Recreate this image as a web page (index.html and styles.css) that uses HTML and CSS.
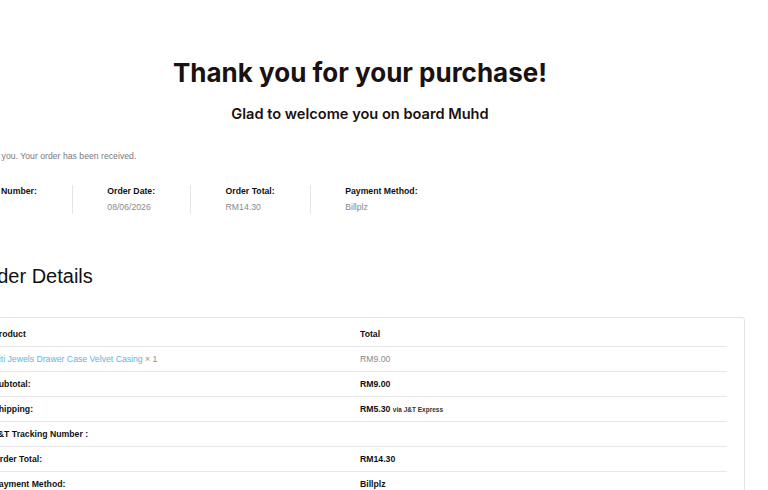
FILE: index.html
```html
<!DOCTYPE html>
<html lang="en">
<head>
    <meta charset="UTF-8">
    <meta name="viewport" content="width=device-width, initial-scale=1.0">
    <title>Order Received</title>
    <link rel="stylesheet" href="styles.css">
</head>
<body>
    <div class="container">
        <h1 class="thanks-title">Thank you for your purchase!</h1>
        <h3 class="thanks-sub">Glad to welcome you on board Muhd</h3>

        <p class="notice">Thank you. Your order has been received.</p>

        <ul class="overview">
            <li>
                <span class="label">Order Number:</span>
                <strong class="value"></strong>
            </li>
            <li>
                <span class="label">Order Date:</span>
                <strong class="value">08/06/2026</strong>
            </li>
            <li>
                <span class="label">Order Total:</span>
                <strong class="value">RM14.30</strong>
            </li>
            <li>
                <span class="label">Payment Method:</span>
                <strong class="value">Billplz</strong>
            </li>
        </ul>

        <h2 class="details-title">Order Details</h2>

        <div class="details">
            <table class="details-table">
                <thead>
                    <tr>
                        <th>Product</th>
                        <th>Total</th>
                    </tr>
                </thead>
                <tbody>
                    <tr>
                        <td class="product"><a href="#">Siti Jewels Drawer Case Velvet Casing</a> <span class="qty">&times; 1</span></td>
                        <td class="muted">RM9.00</td>
                    </tr>
                </tbody>
                <tfoot>
                    <tr>
                        <th>Subtotal:</th>
                        <td>RM9.00</td>
                    </tr>
                    <tr>
                        <th>Shipping:</th>
                        <td>RM5.30 <small class="via">via J&amp;T Express</small></td>
                    </tr>
                    <tr>
                        <th>J&amp;T Tracking Number :</th>
                        <td></td>
                    </tr>
                    <tr>
                        <th>Order Total:</th>
                        <td>RM14.30</td>
                    </tr>
                    <tr>
                        <th>Payment Method:</th>
                        <td>Billplz</td>
                    </tr>
                </tfoot>
            </table>
        </div>
    </div>
</body>
</html>
```

FILE: styles.css
```css
body {
    font-family: 'Liberation Sans', Arial, sans-serif;
    font-size: 8.7px;
    margin: 0;
    padding: 0;
    background: #fff;
    color: #111;
    overflow: hidden;
}

.container {
    width: 770px;
    margin-left: -25px;
    padding-top: 57px;
}

.thanks-title {
    font-family: 'Inter', 'Noto Sans', sans-serif;
    font-size: 26px;
    font-weight: 700;
    line-height: 31px;
    color: #1a1110;
    text-align: center;
    margin: 0;
}

.thanks-sub {
    font-family: 'Inter', 'Noto Sans', sans-serif;
    font-size: 14.6px;
    font-weight: 600;
    line-height: 20px;
    color: #1a1110;
    text-align: center;
    margin: 16px 0 0;
}

.notice {
    color: #7a7a7a;
    line-height: 13px;
    margin: 26px 0 0;
}

.overview {
    list-style: none;
    display: flex;
    margin: 22px 0 0;
    padding: 0;
}

/* each column closes with a thin divider */
.overview li {
    display: flex;
    flex-direction: column;
    gap: 3px;
    line-height: 13px;
    padding-right: 35px;
    margin-right: 34.5px;
    border-right: 1px solid #e6e6e6;
}

.overview li:last-child {
    border-right: none;
}

.overview .label {
    font-weight: bold;
    color: #111;
}

.overview .value {
    font-weight: normal;
    color: #8a8a8a;
    min-height: 13px;
}

.details-title {
    font-size: 20px;
    font-weight: normal;
    line-height: 23px;
    color: #111;
    margin: 51px 0 0;
}

.details {
    margin-top: 29px;
    border: 1px solid #e4e4e4;
    border-radius: 3px;
    padding: 4px 17px 0;
}

.details-table {
    width: 100%;
    border-collapse: collapse;
}

.details-table th,
.details-table td {
    width: 50%;
    height: 24px;
    padding: 0;
    text-align: left;
    vertical-align: middle;
    border-bottom: 1px solid #e8e8e8;
    font-weight: bold;
    color: #111;
}

.details-table .product,
.details-table .muted {
    font-weight: normal;
    color: #8a8a8a;
}

.product a {
    color: #62b4e2;
    text-decoration: none;
}

.via {
    font-size: 6.5px;
    font-weight: bold;
    color: #333;
}
```
